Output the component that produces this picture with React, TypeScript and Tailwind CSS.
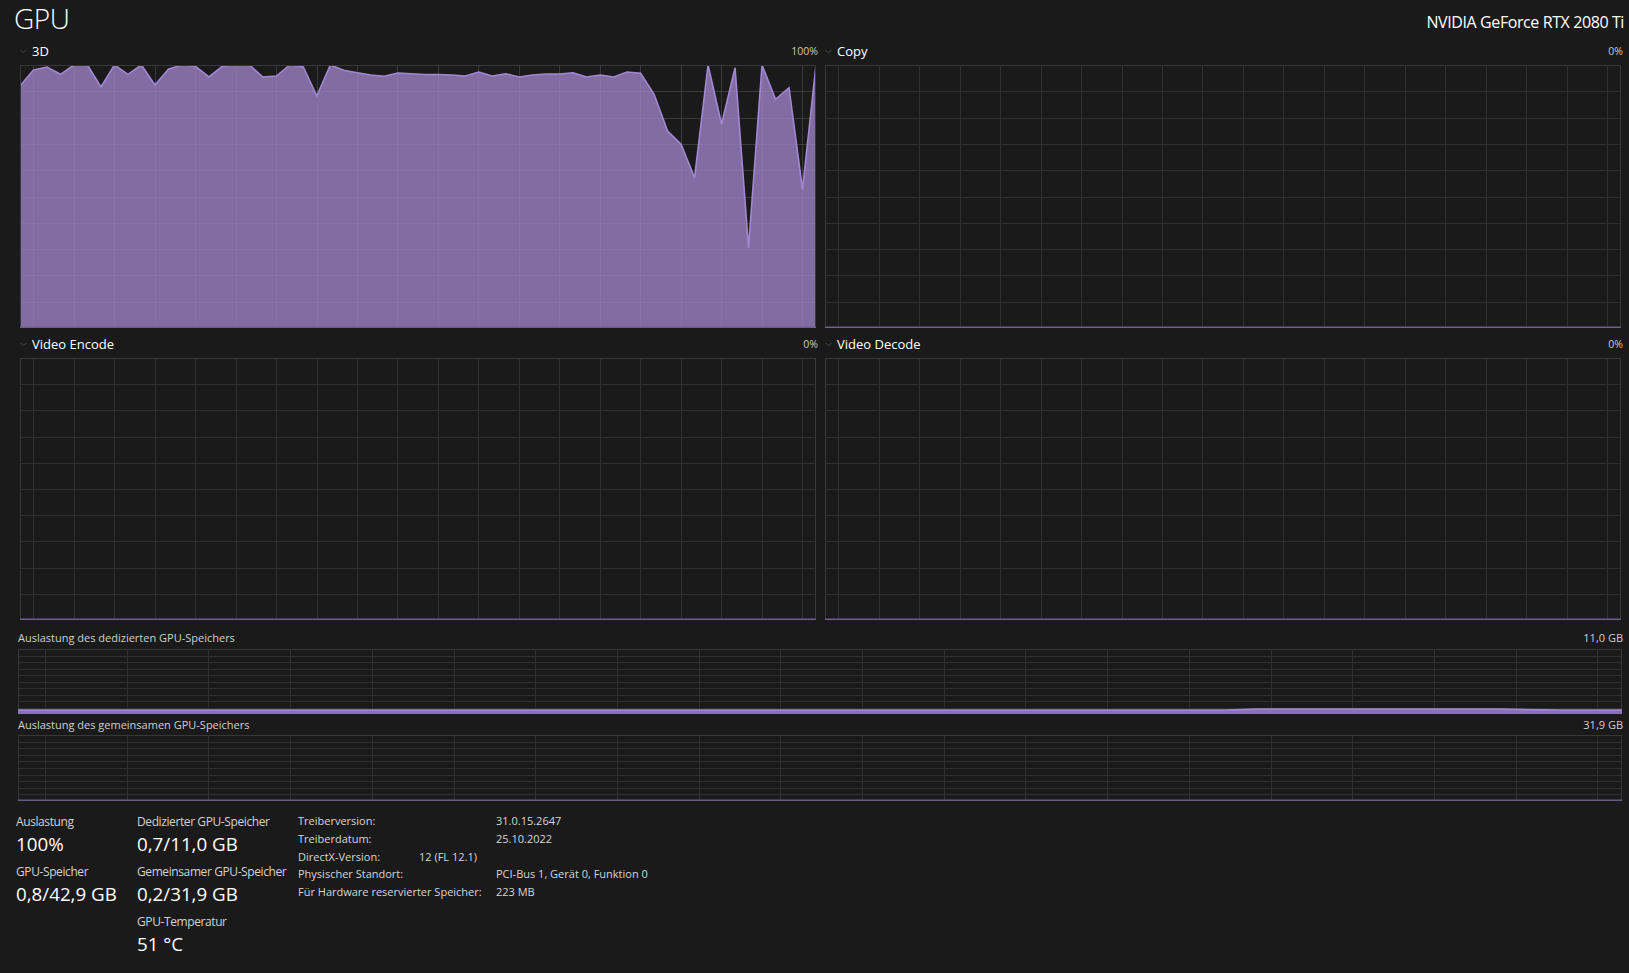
import React from 'react';

const D3 = [
  21, 5, 2, 9.3, 0, 0, 22, 0, 9.3, 0,
  20, 4.3, 0, 1.3, 12, 1.3, 0, 0, 12, 11,
  0, 2, 31, 0, 5.3, 7.7, 10, 11.3, 8, 8.7,
  9.5, 9.5, 10, 11, 7, 11, 8.7, 12, 10, 9,
  9, 7.7, 12, 10, 12, 7, 8.3, 29.3, 66, 79.3,
  112.7, 0, 59.3, 2.7, 182.7, 0, 34.3, 22.7, 124.3, 0,
];

type GridProps = { w: number; h: number; rows: number; spacing: number; offset: number; stroke: string };

function GridLines({ w, h, rows, spacing, offset, stroke }: GridProps) {
  const v: number[] = [];
  for (let x = offset; x < w - 1; x += spacing) v.push(Math.round(x) + 0.5);
  const hl: number[] = [];
  for (let r = 1; r < rows; r++) hl.push(Math.round((r * h) / rows) + 0.5);
  return (
    <g stroke={stroke} strokeWidth={1}>
      {v.map((x) => (
        <line key={'v' + x} x1={x} y1={0} x2={x} y2={h} />
      ))}
      {hl.map((y) => (
        <line key={'h' + y} x1={0} y1={y} x2={w} y2={y} />
      ))}
    </g>
  );
}

function BigChart({ w, h, data }: { w: number; h: number; data?: number[] }) {
  const pts = data
    ? data.map((v, i) => `${((i * w) / (data.length - 1)).toFixed(2)},${v}`).join(' ')
    : '';
  return (
    <svg width={w} height={h} className="block">
      <GridLines w={w} h={h} rows={10} spacing={40.45} offset={13.4} stroke="#303030" />
      {data && <polygon points={`${pts} ${w},${h} 0,${h}`} fill="#826ca2" />}
      {data && <GridLines w={w} h={h} rows={10} spacing={40.45} offset={13.4} stroke="rgba(255,255,255,0.05)" />}
      {data && (
        <polyline points={pts} fill="none" stroke="#a287d3" strokeWidth={1.6} strokeLinejoin="miter" />
      )}
      <rect x={0.5} y={0.5} width={w - 1} height={h - 1} fill="none" stroke="#383838" />
      <line x1={0} y1={h - 0.75} x2={w} y2={h - 0.75} stroke="#6f5d90" strokeWidth={1.5} />
    </svg>
  );
}

function MemChart({ w, h, level, bump }: { w: number; h: number; level: number; bump?: boolean }) {
  const top = h - level;
  const b0 = 1209;
  const b1 = 1542;
  const linePts = bump
    ? `0,${top} ${b0},${top} ${b0 + 30},${top - 1} ${b1 - 60},${top - 1} ${b1},${top} ${w},${top}`
    : `0,${top} ${w},${top}`;
  return (
    <svg width={w} height={h} className="block">
      <GridLines w={w} h={h} rows={10} spacing={81.7} offset={27} stroke="#303030" />
      <rect x={0.5} y={0.5} width={w - 1} height={h - 1} fill="none" stroke="#383838" />
      {level > 1 ? (
        <>
          <polygon points={`${linePts} ${w},${h} 0,${h}`} fill="#8a70b6" />
          <polyline points={linePts} fill="none" stroke="#a58ad6" strokeWidth={1.5} />
        </>
      ) : (
        <line x1={0} y1={h - 0.75} x2={w} y2={h - 0.75} stroke="#6a5a88" strokeWidth={1.5} />
      )}
    </svg>
  );
}

function Chevron() {
  return (
    <svg width={7} height={5} className="block shrink-0">
      <path d="M0.5 0.8 L3.5 3.8 L6.5 0.8" fill="none" stroke="#4a4a4a" strokeWidth={1} />
    </svg>
  );
}

function ChartCell({ label, pct, h, data }: { label: string; pct: string; h: number; data?: number[] }) {
  return (
    <div className="flex flex-col">
      <div className="flex items-center justify-between h-[16px] mb-[6px] w-[796px]">
        <div className="flex items-center">
          <Chevron />
          <span className="ml-[5px] text-[13px] leading-[16px] text-white">{label}</span>
        </div>
        <span className="text-[10.5px] leading-[16px] text-[#c9c9c9] mr-[-2px]">{pct}</span>
      </div>
      <BigChart w={796} h={h} data={data} />
    </div>
  );
}

function Stat({ label, value }: { label: string; value: string }) {
  return (
    <div className="flex flex-col mb-[8px]">
      <div className="text-[12px] leading-[16px] tracking-[-0.4px] text-[#d2d2d2] whitespace-nowrap">{label}</div>
      <div className="mt-[2px] text-[18.75px] leading-[24px] text-white whitespace-nowrap">{value}</div>
    </div>
  );
}

export default function App() {
  return (
    <div className="w-[1629px] h-[973px] overflow-hidden bg-[#1a1a1a] text-white font-['Open_Sans','Noto_Sans',sans-serif] flex flex-col">
      <div className="flex justify-between items-start h-[43px] pl-[14px] pr-[5px]">
        <div className="text-[28px] font-light leading-[36px] tracking-[-0.5px]">GPU</div>
        <div className="text-[16px] leading-[22px] mt-[11px] tracking-[-0.4px]">NVIDIA GeForce RTX 2080 Ti</div>
      </div>

      <div className="grid grid-cols-[796px_796px] gap-x-[9px] gap-y-[8px] ml-[20px]">
        <ChartCell label="3D" pct="100%" h={263} data={D3} />
        <ChartCell label="Copy" pct="0%" h={263} />
        <ChartCell label="Video Encode" pct="0%" h={262} />
        <ChartCell label="Video Decode" pct="0%" h={262} />
      </div>

      <div className="ml-[18px] flex flex-col w-[1604px]">
        <div className="mt-[11px] mb-[4px] flex justify-between text-[11px] leading-[14px] text-[#d0d0d0]">
          <span>Auslastung des dedizierten GPU-Speichers</span>
          <span className="mr-[-1px]">11,0 GB</span>
        </div>
        <MemChart w={1604} h={65} level={4} bump />
        <div className="mt-[4px] mb-[3px] flex justify-between text-[11px] leading-[14px] text-[#d0d0d0]">
          <span>Auslastung des gemeinsamen GPU-Speichers</span>
          <span className="mr-[-1px]">31,9 GB</span>
        </div>
        <MemChart w={1604} h={66} level={0} />
      </div>

      <div className="mt-[13px] ml-[16px] flex">
        <div className="w-[121px] flex flex-col">
          <Stat label="Auslastung" value="100%" />
          <Stat label="GPU-Speicher" value="0,8/42,9 GB" />
        </div>
        <div className="w-[161px] flex flex-col">
          <Stat label="Dedizierter GPU-Speicher" value="0,7/11,0 GB" />
          <Stat label="Gemeinsamer GPU-Speicher" value="0,2/31,9 GB" />
          <Stat label="GPU-Temperatur" value="51 °C" />
        </div>
        <div className="-mt-[2px] grid grid-cols-[121px_77px_auto] text-[11px] leading-[17.75px] text-[#d6d6d6] whitespace-nowrap content-start">
          <span className="col-span-2">Treiberversion:</span>
          <span>31.0.15.2647</span>
          <span className="col-span-2">Treiberdatum:</span>
          <span>25.10.2022</span>
          <span>DirectX-Version:</span>
          <span className="col-span-2">12 (FL 12.1)</span>
          <span className="col-span-2">Physischer Standort:</span>
          <span>PCI-Bus 1, Gerät 0, Funktion 0</span>
          <span className="col-span-2">Für Hardware reservierter Speicher:</span>
          <span>223 MB</span>
        </div>
      </div>
    </div>
  );
}
